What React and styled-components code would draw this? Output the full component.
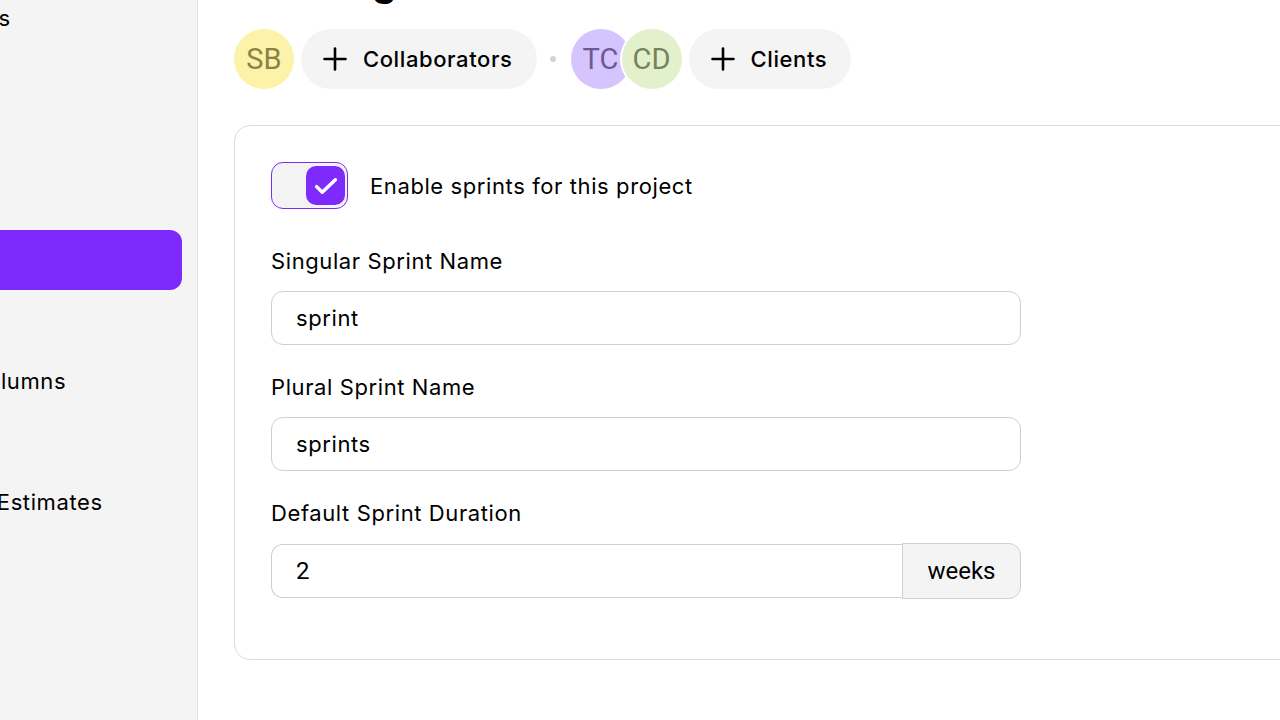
import React from 'react';
import styled, { createGlobalStyle } from 'styled-components';

const GlobalStyle = createGlobalStyle`
  html, body {
    margin: 0;
    padding: 0;
    background: #fff;
    font-family: Inter, "Noto Sans", sans-serif;
    color: #000;
    overflow: hidden;
  }
  * { box-sizing: border-box; }
`;

const navItems = [
  { label: 'Details' },
  { label: 'API' },
  { label: 'Plan', active: true },
  { label: 'All Columns' },
  { label: 'Time Estimates' },
  { label: 'Tags' },
];

const PlusIcon = () => (
  <svg width="24" height="24" viewBox="0 0 24 24" fill="none">
    <path d="M12 1.5v21M1.5 12h21" stroke="#000" strokeWidth="2.6" strokeLinecap="round" />
  </svg>
);

const CheckIcon = () => (
  <svg width="30" height="30" viewBox="0 0 24 24" fill="none">
    <path d="M4.5 12.5l4.5 4.5L19.5 7" stroke="#fff" strokeWidth="2.8" strokeLinecap="round" strokeLinejoin="round" />
  </svg>
);

const App = () => {
  return (
    <Page>
      <GlobalStyle />
      <Sidebar>
        <Nav>
          {navItems.map((item) => (
            <NavItem key={item.label} $active={item.active}>
              {item.label}
            </NavItem>
          ))}
        </Nav>
      </Sidebar>

      <Main>
        <Heading>Planning</Heading>

        <PeopleRow>
          <Avatar $bg="#fdf2a9" $fg="#8c8246">SB</Avatar>
          <AddPill>
            <PlusIcon />
            Collaborators
          </AddPill>
          <Dot />
          <AvatarStack>
            <Avatar $bg="#d5c4fe" $fg="#6c5a96">TC</Avatar>
            <Avatar $bg="#e3f0cc" $fg="#75845e" $ring>CD</Avatar>
          </AvatarStack>
          <AddPill>
            <PlusIcon />
            Clients
          </AddPill>
        </PeopleRow>

        <Card>
          <ToggleRow>
            <Toggle>
              <Knob>
                <CheckIcon />
              </Knob>
            </Toggle>
            <ToggleLabel>Enable sprints for this project</ToggleLabel>
          </ToggleRow>

          <Field>
            <Label>Singular Sprint Name</Label>
            <TextInput defaultValue="sprint" />
          </Field>

          <Field>
            <Label>Plural Sprint Name</Label>
            <TextInput defaultValue="sprints" />
          </Field>

          <Field>
            <Label>Default Sprint Duration</Label>
            <InputGroup>
              <NumberInput defaultValue="2" />
              <Addon>weeks</Addon>
            </InputGroup>
          </Field>
        </Card>
      </Main>
    </Page>
  );
};

const Page = styled.div`
  display: flex;
  width: 1280px;
  height: 720px;
  overflow: hidden;
  letter-spacing: 0.6px;
`;

const Sidebar = styled.aside`
  flex: 0 0 198px;
  height: 720px;
  background: #f4f4f4;
  border-right: 1px solid #e2e2e2;
  overflow: hidden;
`;

const Nav = styled.nav`
  display: flex;
  flex-direction: column;
  gap: 61px;
  margin: -12px 0 0 -88px;
  padding-right: 15px;
`;

const NavItem = styled.div`
  display: flex;
  align-items: center;
  height: 60px;
  padding-left: 24px;
  border-radius: 12px;
  font-size: 22px;
  white-space: nowrap;
  background: ${(p) => (p.$active ? '#7f2afd' : 'transparent')};
  color: ${(p) => (p.$active ? '#fff' : '#000')};
`;

const Main = styled.main`
  flex: 1;
  display: flex;
  flex-direction: column;
  padding: 0 0 0 36px;
  margin-top: -41px;
  min-width: 0;
`;

const Heading = styled.h1`
  margin: 0;
  font-size: 38px;
  line-height: 46px;
  font-weight: 700;
  letter-spacing: 0;
`;

const PeopleRow = styled.div`
  display: flex;
  align-items: center;
  gap: 7px;
  margin-top: 24px;
  height: 60px;
`;

const Avatar = styled.div`
  width: 60px;
  height: 60px;
  border-radius: 50%;
  display: flex;
  align-items: center;
  justify-content: center;
  background: ${(p) => p.$bg};
  color: ${(p) => p.$fg};
  font-family: Roboto, "Liberation Sans", sans-serif;
  font-size: 29px;
  letter-spacing: 0;
  flex-shrink: 0;
  ${(p) => p.$ring && `box-shadow: 0 0 0 2px #fff; position: relative;`}
`;

const AvatarStack = styled.div`
  display: flex;
  margin-left: 8px;

  & > * + * {
    margin-left: -9px;
  }
`;

const AddPill = styled.button`
  display: flex;
  align-items: center;
  gap: 16px;
  height: 60px;
  padding: 0 24px 0 22px;
  border: none;
  border-radius: 30px;
  background: #f4f4f4;
  font-family: Inter, "Noto Sans", sans-serif;
  font-size: 22px;
  font-weight: 500;
  letter-spacing: 0.6px;
  color: #000;
`;

const Dot = styled.span`
  width: 6px;
  height: 6px;
  border-radius: 50%;
  background: #d4d4d4;
  margin-left: 6px;
`;

const Card = styled.section`
  margin-top: 36px;
  width: 1100px;
  border: 1px solid #dcdcdc;
  border-radius: 16px;
  padding: 36px 36px 60px;
  display: flex;
  flex-direction: column;
  gap: 28px;
`;

const ToggleRow = styled.div`
  display: flex;
  align-items: center;
  gap: 22px;
  margin-bottom: 10px;
`;

const Toggle = styled.div`
  width: 77px;
  height: 47px;
  border: 1px solid #7f2afd;
  border-radius: 12px;
  background: #f3f3f3;
  display: flex;
  align-items: center;
  justify-content: flex-end;
  padding-right: 2px;
`;

const Knob = styled.div`
  width: 39px;
  height: 39px;
  border-radius: 10px;
  background: #7f2afd;
  display: flex;
  align-items: center;
  justify-content: center;
`;

const ToggleLabel = styled.span`
  font-size: 22px;
`;

const Field = styled.div`
  display: flex;
  flex-direction: column;
  gap: 16px;
  width: 750px;
`;

const Label = styled.label`
  font-size: 22px;
  line-height: 28px;
`;

const TextInput = styled.input`
  height: 54px;
  width: 100%;
  border: 1px solid #cfcfcf;
  border-radius: 12px;
  padding: 0 24px;
  font-family: Inter, "Noto Sans", sans-serif;
  font-size: 22px;
  letter-spacing: 0.6px;
  color: #000;
  outline: none;
`;

const InputGroup = styled.div`
  display: flex;
  height: 56px;
  align-items: stretch;
`;

const NumberInput = styled.input`
  flex: 1;
  margin: 1px 0;
  border: 1px solid #cfcfcf;
  border-right: none;
  border-radius: 12px 0 0 12px;
  padding: 0 24px;
  font-family: Roboto, "Liberation Sans", sans-serif;
  font-size: 24px;
  color: #000;
  outline: none;
  min-width: 0;
`;

const Addon = styled.div`
  width: 119px;
  display: flex;
  align-items: center;
  justify-content: center;
  background: #f4f4f4;
  border: 1px solid #cfcfcf;
  border-radius: 0 12px 12px 0;
  font-family: Roboto, "Liberation Sans", sans-serif;
  font-size: 24px;
  letter-spacing: 0;
`;

export default App;
